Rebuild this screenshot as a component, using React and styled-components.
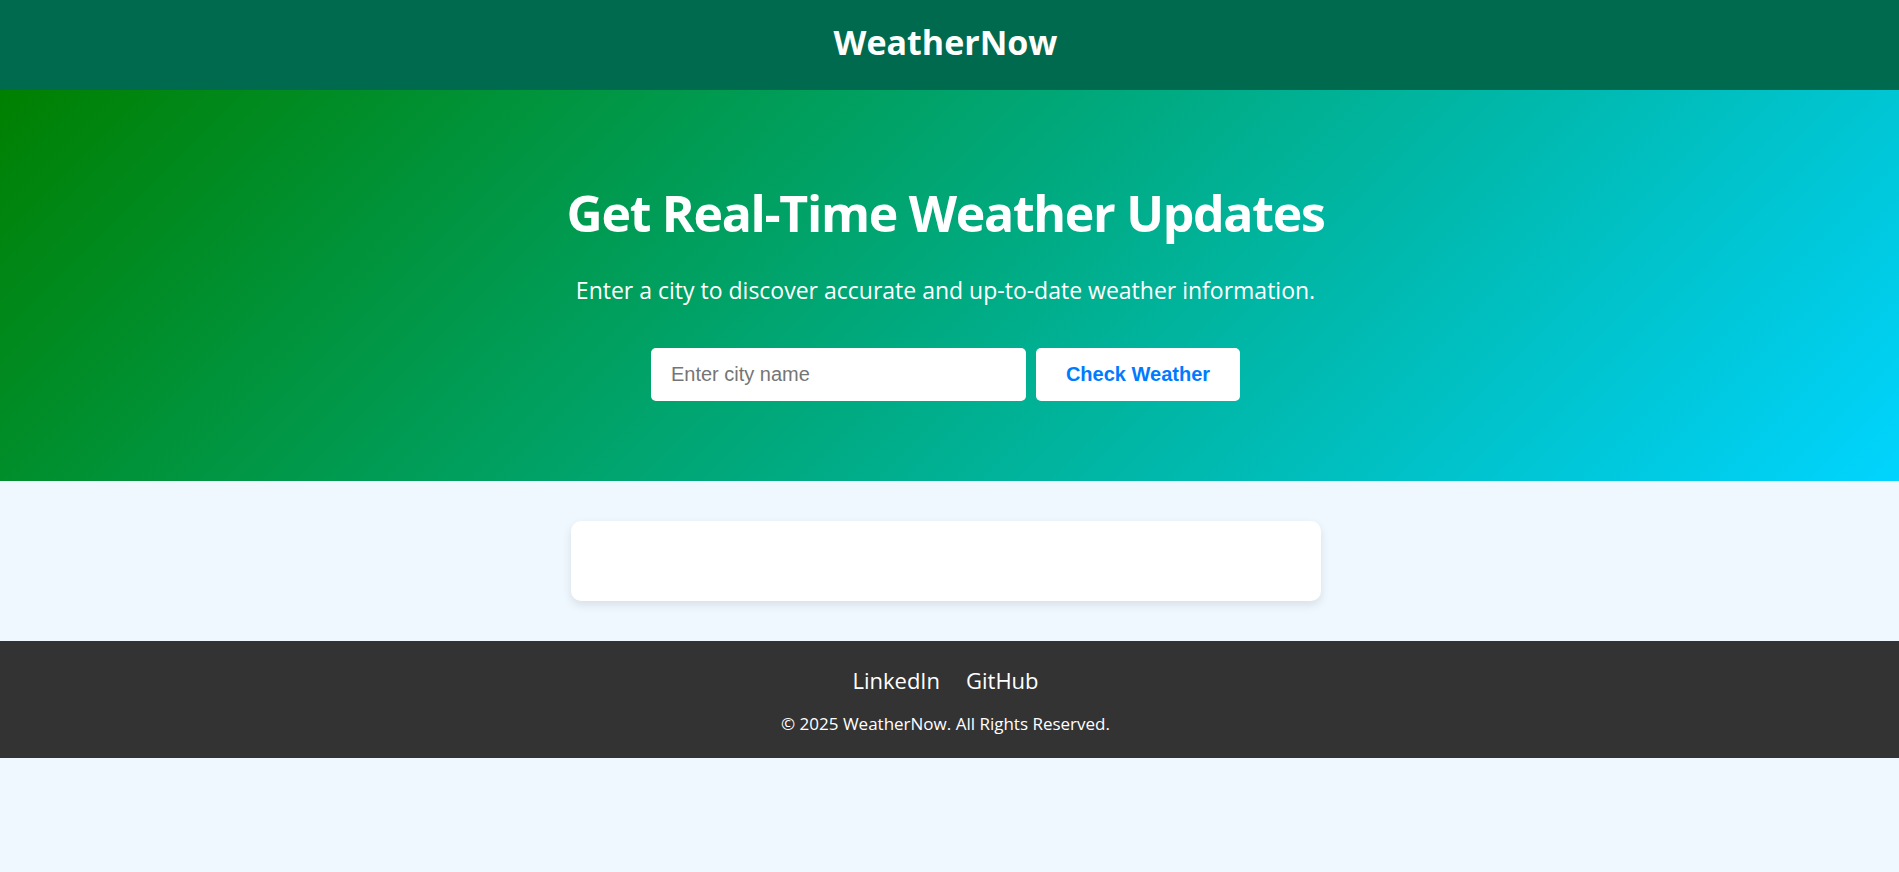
import React, { useState } from "react";
import styled, { createGlobalStyle } from "styled-components";

const GlobalStyle = createGlobalStyle`
  * {
    box-sizing: border-box;
  }
  body {
    margin: 0;
    background-color: #f0f8ff;
    font-family: "Open Sans", "Noto Sans", sans-serif;
    color: #333;
  }
`;

// content sits a few px left of the true centre in the reference
const Header = styled.header`
  background-color: #006a4e;
  color: #fff;
  text-align: center;
  padding: 17px 8px 23px 0;
`;

const Logo = styled.h1`
  margin: 0;
  font-size: 34px;
  font-weight: 700;
  line-height: 50px;
`;

const Hero = styled.section`
  background: linear-gradient(135deg, #008000, #00d4ff);
  color: #fff;
  text-align: center;
  padding: 90px 28px 80px 20px;
`;

const Title = styled.h2`
  margin: 0;
  font-size: 50px;
  font-weight: 700;
  letter-spacing: -1.3px;
  line-height: 66px;
`;

const Subtitle = styled.p`
  margin: 27px 0 41px;
  font-size: 23px;
  line-height: 34px;
`;

const SearchRow = styled.form`
  display: flex;
  justify-content: center;
  gap: 10px;
`;

const CityInput = styled.input`
  width: 375px;
  padding: 15px 20px;
  border: none;
  border-radius: 5px;
  font-family: "Liberation Sans", Arial, sans-serif;
  font-size: 20px;
  line-height: 23px;
  color: #333;
  outline: none;
  &::placeholder {
    color: #757575;
  }
`;

const CheckButton = styled.button`
  padding: 15px 30px;
  border: none;
  border-radius: 5px;
  background-color: #fff;
  color: #007bff;
  font-family: "Liberation Sans", Arial, sans-serif;
  font-size: 20px;
  font-weight: 700;
  line-height: 23px;
  cursor: pointer;
`;

const Main = styled.main`
  padding: 40px 28px 40px 20px;
  display: flex;
  justify-content: center;
`;

const WeatherCard = styled.div`
  width: 750px;
  height: 80px;
  background-color: #fff;
  border-radius: 10px;
  box-shadow: 0 4px 10px rgba(0, 0, 0, 0.1);
`;

const Footer = styled.footer`
  background-color: #333;
  color: #fff;
  text-align: center;
  padding: 22px 28px 21px 20px;
`;

const Links = styled.div`
  display: flex;
  justify-content: center;
  gap: 26px;
`;

const FooterLink = styled.a`
  color: #fff;
  text-decoration: none;
  font-size: 22px;
  line-height: 34px;
`;

const Copyright = styled.p`
  margin: 13px 0 0;
  font-size: 17px;
  line-height: 27px;
`;

export default function App() {
  const [city, setCity] = useState("");

  return (
    <>
      <GlobalStyle />
      <Header>
        <Logo>WeatherNow</Logo>
      </Header>
      <Hero>
        <Title>Get Real-Time Weather Updates</Title>
        <Subtitle>
          Enter a city to discover accurate and up-to-date weather information.
        </Subtitle>
        <SearchRow onSubmit={(e) => e.preventDefault()}>
          <CityInput
            type="text"
            placeholder="Enter city name"
            value={city}
            onChange={(e) => setCity(e.target.value)}
          />
          <CheckButton type="submit">Check Weather</CheckButton>
        </SearchRow>
      </Hero>
      <Main>
        <WeatherCard />
      </Main>
      <Footer>
        <Links>
          <FooterLink href="#">LinkedIn</FooterLink>
          <FooterLink href="#">GitHub</FooterLink>
        </Links>
        <Copyright>© 2025 WeatherNow. All Rights Reserved.</Copyright>
      </Footer>
    </>
  );
}
